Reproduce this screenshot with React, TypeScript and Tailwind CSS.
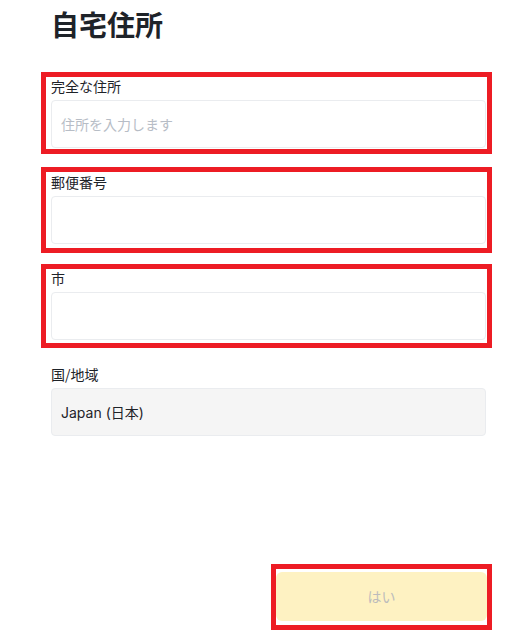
import React from "react";

const font = { fontFamily: '"Noto Sans CJK JP", "Noto Sans", sans-serif' };

function Field({ label, placeholder }: { label: string; placeholder?: string }) {
  return (
    <div className="flex flex-col">
      <div className="h-[20px] text-[14px] leading-[20px] text-[#1e2329]">{label}</div>
      <div className="mt-[4px] h-[48px] w-[435px] rounded-[4px] border border-[#eaecef] bg-white px-[9px] flex items-center">
        <input
          className="w-full bg-transparent text-[14px] outline-none placeholder:text-[#b7bdc6]"
          placeholder={placeholder}
          style={font}
        />
      </div>
    </div>
  );
}

export default function App() {
  return (
    <div className="relative h-[635px] w-[519px] overflow-hidden bg-white" style={font}>
      <div className="ml-[51px] flex w-[436px] flex-col">
        <h1 className="mt-[6px] h-[36px] text-[28px] font-bold leading-[36px] text-[#1e2329]">自宅住所</h1>
        <div className="mt-[34px] flex flex-col gap-[24px]">
          <Field label="完全な住所" placeholder="住所を入力します" />
          <Field label="郵便番号" />
          <Field label="市" />
          <div className="flex flex-col">
            <div className="h-[20px] text-[14px] leading-[20px] text-[#1e2329]">国/地域</div>
            <div className="mt-[4px] flex h-[48px] w-[435px] items-center rounded-[4px] border border-[#eaecef] bg-[#f5f5f5] px-[9px] text-[14px] text-[#1e2329]" style={{ fontFamily: 'Inter, "Noto Sans CJK JP", sans-serif' }}>
              Japan (日本)
            </div>
          </div>
        </div>
        <div className="mt-[136px] flex justify-end">
          <button className="flex h-[49px] w-[211px] items-center justify-center rounded-[6px] bg-[#fef2c2] text-[14px] text-[#bcbcbc]" style={font}>
            はい
          </button>
        </div>
      </div>

      <div className="pointer-events-none absolute left-[41px] top-[72px] h-[82px] w-[451px] border-[5px] border-[#ed1c24]" />
      <div className="pointer-events-none absolute left-[41px] top-[167px] h-[86px] w-[451px] border-[5px] border-[#ed1c24]" />
      <div className="pointer-events-none absolute left-[41px] top-[264px] h-[84px] w-[451px] border-[5px] border-[#ed1c24]" />
      <div className="pointer-events-none absolute left-[271px] top-[564px] h-[66px] w-[221px] border-[5px] border-[#ed1c24]" />
    </div>
  );
}
